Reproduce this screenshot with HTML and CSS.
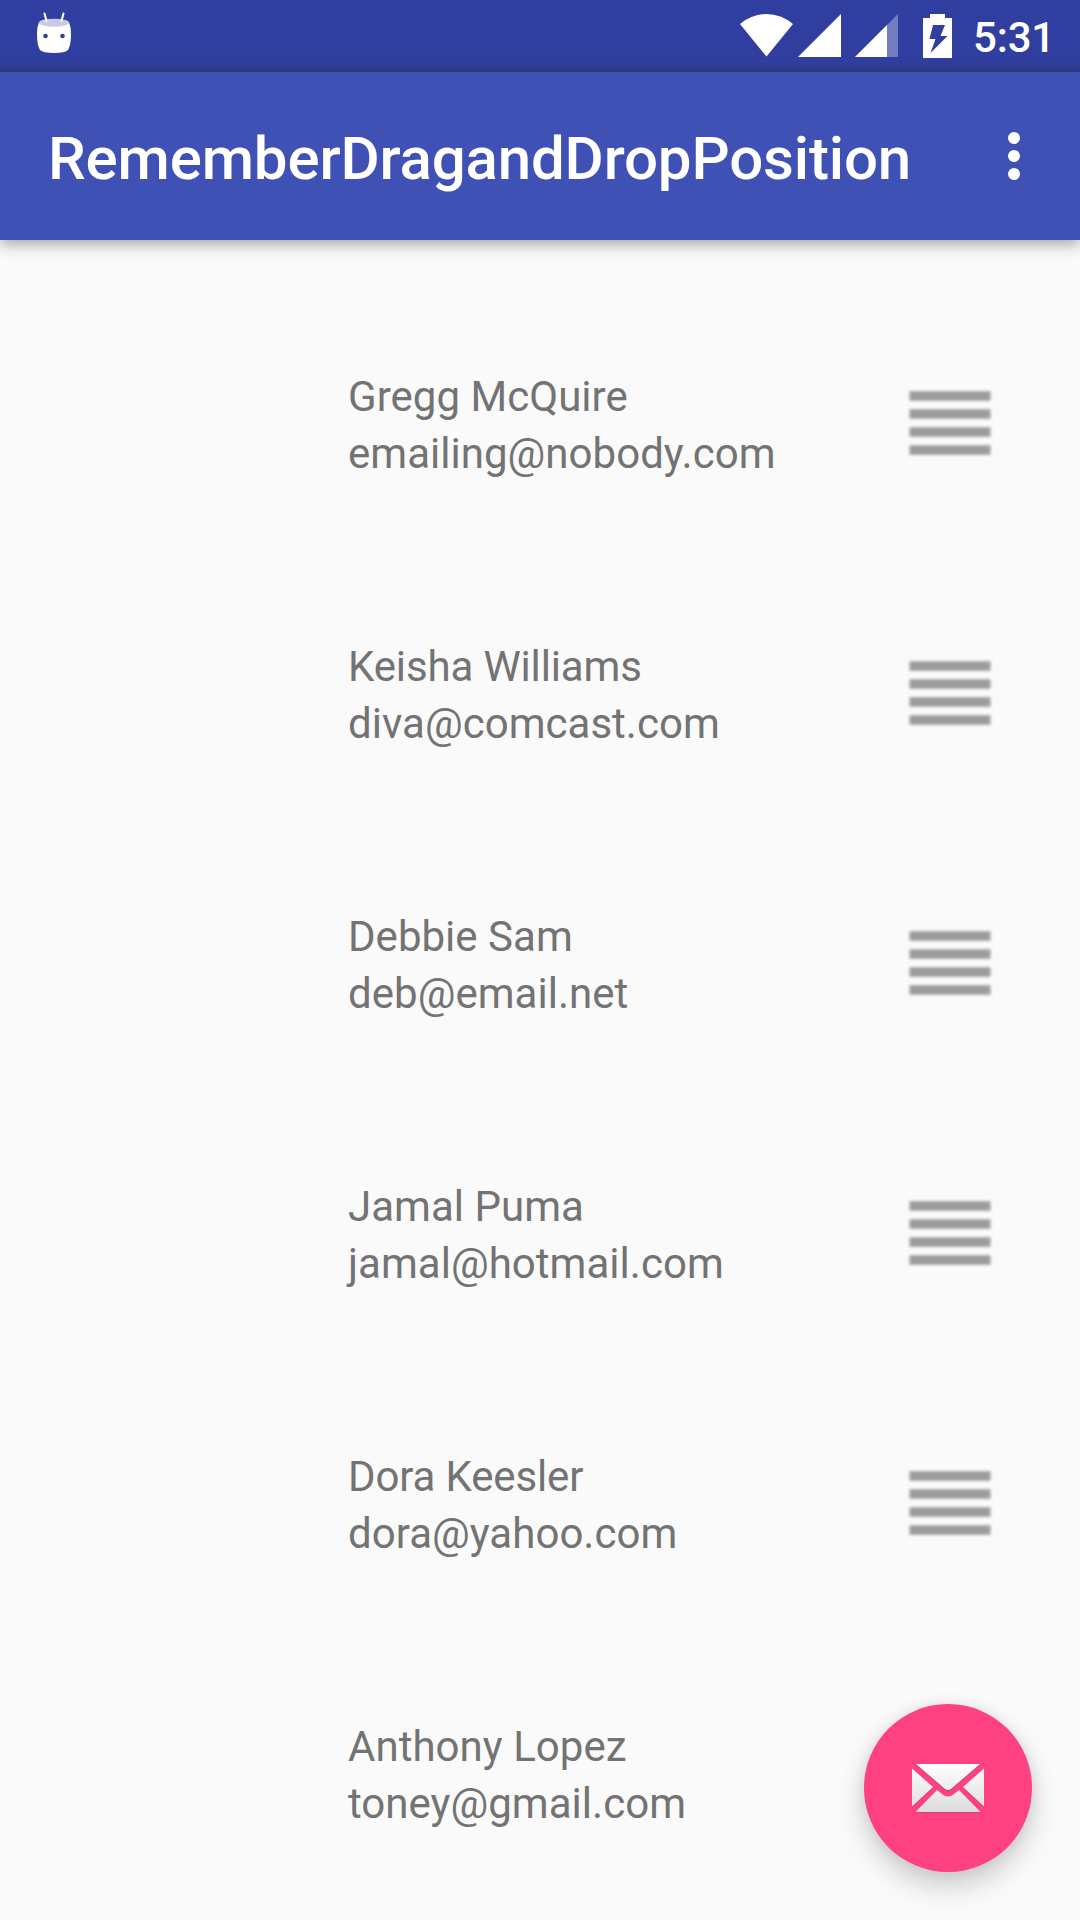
FILE: index.html
```html
<!DOCTYPE html>
<html lang="en">
<head>
<meta charset="utf-8">
<title>RememberDragandDropPosition</title>
<link rel="stylesheet" href="styles.css">
</head>
<body>
<svg class="defs" width="0" height="0" aria-hidden="true">
  <symbol id="handle" viewBox="0 0 96 80">
    <g fill="#9b9b9b">
      <rect x="7.500" y="8.250" width="81" height="9.500"/>
      <rect x="7.500" y="26.250" width="81" height="9.500"/>
      <rect x="7.500" y="44.250" width="81" height="9.500"/>
      <rect x="7.500" y="62.250" width="81" height="9.500"/>
    </g>
  </symbol>
</svg>
<div class="screen">
  <header class="status">
    <svg class="droid" width="36" height="44" viewBox="36 10 36 44">
      <path d="M39 22Q54 28 69 22Q71 27 71 34Q71 45 68 50Q65 53 54 53Q43 53 40 50Q37 45 37 34Q37 27 39 22Z" fill="#fff"/>
      <ellipse cx="54" cy="22.700" rx="15" ry="4" fill="#c9cbe4"/>
      <path d="M44.500 13.500L46.500 21M63.500 13.500L61.500 21" stroke="#fff" stroke-width="2" stroke-linecap="round"/>
      <circle cx="45.500" cy="36" r="2.300" fill="#303f9f"/>
      <circle cx="62.500" cy="36" r="2.300" fill="#303f9f"/>
    </svg>
    <div class="signals">
      <svg width="214" height="46" viewBox="739 12 214 46">
        <path d="M740 24Q752 14 766.500 14T793 24L766.500 56.500Z" fill="#fff"/>
        <path d="M798 57H841V14Z" fill="#fff"/>
        <path d="M855 57H898V14Z" fill="#fff" fill-opacity=".32"/>
        <path d="M855 57H887V25Z" fill="#fff"/>
        <path fill-rule="evenodd" d="M923 18H930V14H945V18H952V58H923ZM933 25L929.500 39H935.500L930.500 53L947.500 36H940.500L945 25Z" fill="#fff"/>
      </svg>
      <span class="clock">5:31</span>
    </div>
  </header>
  <div class="toolbar">
    <h1 class="title">RememberDragandDropPosition</h1>
    <svg class="more" width="12" height="48" viewBox="0 0 12 48" fill="#fff">
      <circle cx="6" cy="6" r="6"/><circle cx="6" cy="24" r="6"/><circle cx="6" cy="42" r="6"/>
    </svg>
  </div>
  <main class="list">
    <div class="row"><div class="person"><div>Gregg McQuire</div><div>emailing@nobody.com</div></div><svg class="handle"><use href="#handle"/></svg></div>
    <div class="row"><div class="person"><div class="tight">Keisha Williams</div><div>diva@comcast.com</div></div><svg class="handle"><use href="#handle"/></svg></div>
    <div class="row"><div class="person"><div>Debbie Sam</div><div>deb@email.net</div></div><svg class="handle"><use href="#handle"/></svg></div>
    <div class="row"><div class="person"><div>Jamal Puma</div><div>jamal@hotmail.com</div></div><svg class="handle"><use href="#handle"/></svg></div>
    <div class="row"><div class="person"><div class="tight">Dora Keesler</div><div>dora@yahoo.com</div></div><svg class="handle"><use href="#handle"/></svg></div>
    <div class="row"><div class="person"><div>Anthony Lopez</div><div>toney@gmail.com</div></div><svg class="handle"><use href="#handle"/></svg></div>
  </main>
  <button class="fab" aria-label="Email">
    <svg width="72" height="52" viewBox="0 0 72 52">
      <defs>
        <linearGradient id="paper" gradientUnits="userSpaceOnUse" x1="0" y1="0" x2="0" y2="50">
          <stop offset="0" stop-color="#fff"/><stop offset="1" stop-color="#dcdcdc"/>
        </linearGradient>
        <filter id="edge" x="-10%" y="-10%" width="120%" height="120%">
          <feGaussianBlur stdDeviation=".6"/>
        </filter>
        <clipPath id="bounds"><rect width="72" height="52"/></clipPath>
      </defs>
      <g clip-path="url(#bounds)">
        <g fill="#70535c" opacity=".5" filter="url(#edge)" transform="translate(0 .8)">
          <path d="M4 1H68L39 26.500Q36 28.500 33 26.500Z"/>
          <path d="M0 5.500L21 24L0 43.500Z"/><path d="M72 5.500L51 24L72 43.500Z"/>
          <path d="M3.500 49L25 27L32 32.500Q36 34.500 40 32.500L47 27L68.500 49Z"/>
        </g>
        <g fill="url(#paper)">
          <path d="M4 1H68L39 26Q36 28 33 26Z"/>
          <path d="M0 5.500L21 24L0 43.500Z"/><path d="M72 5.500L51 24L72 43.500Z"/>
          <path d="M3.500 49L25 27L32 32.500Q36 34.500 40 32.500L47 27L68.500 49Z"/>
        </g>
      </g>
    </svg>
  </button>
</div>
</body>
</html>
```
FILE: styles.css
```css
body {
  margin: 0;
  background: #fafafa;
  font-family: Roboto, sans-serif;
}
.defs {
  position: absolute;
}
.screen {
  position: relative;
  display: flex;
  flex-direction: column;
  width: 1080px;
  height: 1920px;
  overflow: hidden;
}
.status {
  flex: none;
  display: flex;
  justify-content: space-between;
  box-sizing: border-box;
  height: 72px;
  padding: 10px 25px 0 36px;
  background: linear-gradient(#303f9f 60px, #2f3c96 66px, #2a3580 72px);
}
.signals {
  display: flex;
  margin-top: 2px;
}
.clock {
  margin: 1px 0 0 20px;
  color: #fff;
  font-size: 42px;
  font-weight: 500;
  letter-spacing: -.2px;
  line-height: 50px;
}
.toolbar {
  flex: none;
  display: flex;
  align-items: center;
  justify-content: space-between;
  box-sizing: border-box;
  height: 168px;
  padding: 0 60px 0 48px;
  background: #3f51b5;
  box-shadow: 0 4px 14px rgba(0, 0, 0, .36);
  clip-path: inset(0 0 -30px 0);
}
.title {
  margin: 6px 0 0;
  color: #fff;
  font-size: 60px;
  font-weight: 500;
  letter-spacing: -.15px;
  line-height: 70px;
}
.list {
  padding: 48px 82px 0 348px;
}
.row {
  display: flex;
  align-items: center;
  justify-content: space-between;
  height: 270px;
}
.person {
  padding-top: 4px;
  color: #737373;
  font-size: 42px;
  letter-spacing: .03px;
  line-height: 57px;
}
.tight {
  letter-spacing: -.14px;
}
.handle {
  width: 96px;
  height: 80px;
  filter: blur(1.5px);
}
.fab {
  position: absolute;
  right: 48px;
  bottom: 48px;
  display: flex;
  align-items: center;
  justify-content: center;
  width: 168px;
  height: 168px;
  padding: 2px 0 0;
  border: 0;
  border-radius: 50%;
  background: #ff4081;
  box-shadow: 0 14px 28px rgba(0, 0, 0, .19), 0 0 14px rgba(0, 0, 0, .07);
}
```
